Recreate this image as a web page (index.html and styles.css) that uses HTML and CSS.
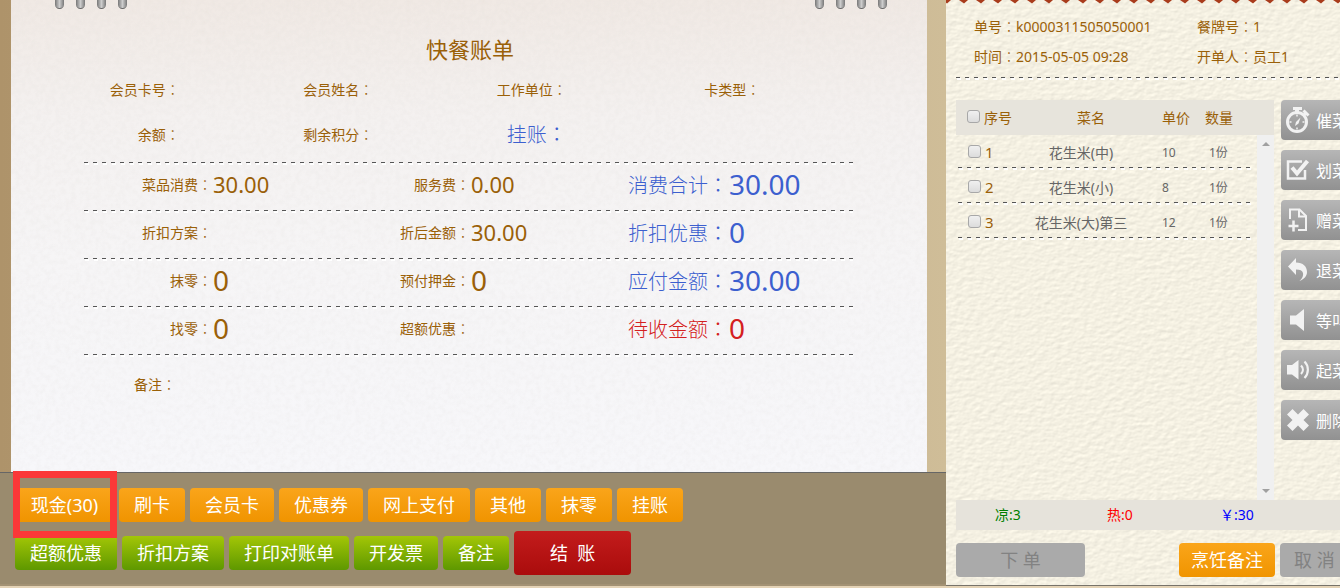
FILE: index.html
```html
<!DOCTYPE html>
<html lang="zh-CN">
<head>
  <meta charset="UTF-8">
  <meta name="viewport" content="width=device-width, initial-scale=1.0">
  <title>快餐账单</title>
  <link rel="stylesheet" href="styles.css">
</head>
<body>
  <div class="page">
    <main class="bill">
      <div class="desk">
        <div class="paper">
          <div class="rings">
            <div class="ring-group"><i></i><i></i><i></i><i></i></div>
            <div class="ring-group"><i></i><i></i><i></i><i></i></div>
          </div>
          <h1>快餐账单</h1>

          <div class="member">
            <div class="label">会员卡号<span class="colon">：</span></div>
            <div class="label">会员姓名<span class="colon">：</span></div>
            <div class="label">工作单位<span class="colon">：</span></div>
            <div class="label">卡类型<span class="colon">：</span></div>
            <div class="label">余额<span class="colon">：</span></div>
            <div class="label">剩余积分<span class="colon">：</span></div>
            <div class="label total">挂账<span class="colon">：</span></div>
          </div>

          <div class="sums">
            <div class="sum-row">
              <span class="label">菜品消费<span class="colon">：</span></span><span class="value">30.00</span>
              <span class="label">服务费<span class="colon">：</span></span><span class="value">0.00</span>
              <span class="label total">消费合计<span class="colon">：</span></span><span class="value big total">30.00</span>
            </div>
            <div class="sum-row">
              <span class="label">折扣方案<span class="colon">：</span></span><span class="value"></span>
              <span class="label">折后金额<span class="colon">：</span></span><span class="value">30.00</span>
              <span class="label total">折扣优惠<span class="colon">：</span></span><span class="value big total">0</span>
            </div>
            <div class="sum-row">
              <span class="label">抹零<span class="colon">：</span></span><span class="value big">0</span>
              <span class="label">预付押金<span class="colon">：</span></span><span class="value big">0</span>
              <span class="label total">应付金额<span class="colon">：</span></span><span class="value big total">30.00</span>
            </div>
            <div class="sum-row">
              <span class="label">找零<span class="colon">：</span></span><span class="value big">0</span>
              <span class="label">超额优惠<span class="colon">：</span></span><span class="value"></span>
              <span class="label total due">待收金额<span class="colon">：</span></span><span class="value big total due">0</span>
            </div>
          </div>

          <div class="remark">备注<span class="colon">：</span></div>
        </div>
      </div>

      <div class="actions">
        <div class="action-row">
          <div class="marked">
            <button type="button" class="btn orange cash">现金(30)</button>
          </div>
          <button type="button" class="btn orange">刷卡</button>
          <button type="button" class="btn orange">会员卡</button>
          <button type="button" class="btn orange">优惠券</button>
          <button type="button" class="btn orange">网上支付</button>
          <button type="button" class="btn orange">其他</button>
          <button type="button" class="btn orange">抹零</button>
          <button type="button" class="btn orange">挂账</button>
        </div>
        <div class="action-row">
          <button type="button" class="btn green">超额优惠</button>
          <button type="button" class="btn green">折扣方案</button>
          <button type="button" class="btn green">打印对账单</button>
          <button type="button" class="btn green">开发票</button>
          <button type="button" class="btn green">备注</button>
          <button type="button" class="btn red">结&nbsp;&nbsp;账</button>
        </div>
      </div>
    </main>

    <aside class="order">
      <div class="order-info">
        <div>单号<span class="colon">：</span>k0000311505050001</div>
        <div>餐牌号<span class="colon">：</span>1</div>
        <div>时间<span class="colon">：</span>2015-05-05 09:28</div>
        <div>开单人<span class="colon">：</span>员工1</div>
      </div>

      <div class="order-body">
        <div class="dishes">
          <table>
            <thead>
              <tr>
                <th class="col-no"><label><input type="checkbox">序号</label></th>
                <th class="col-name">菜名</th>
                <th class="col-price">单价</th>
                <th class="col-count">数量</th>
              </tr>
            </thead>
            <tbody>
              <tr>
                <td class="col-no"><label><input type="checkbox">1</label></td>
                <td class="col-name">花生米(中)</td>
                <td class="col-price">10</td>
                <td class="col-count">1份</td>
              </tr>
              <tr>
                <td class="col-no"><label><input type="checkbox">2</label></td>
                <td class="col-name">花生米(小)</td>
                <td class="col-price">8</td>
                <td class="col-count">1份</td>
              </tr>
              <tr>
                <td class="col-no"><label><input type="checkbox">3</label></td>
                <td class="col-name">花生米(大)第三</td>
                <td class="col-price">12</td>
                <td class="col-count">1份</td>
              </tr>
            </tbody>
          </table>
          <div class="scrollbar"><i class="up"></i><i class="down"></i></div>
        </div>

        <div class="tools">
          <button type="button" class="tool">
            <svg width="26" height="28" viewBox="0 0 26 28" fill="none" stroke="#f2f2f2">
              <circle cx="12" cy="16" r="9.5" stroke-width="3"/>
              <path d="M8 2.500h9" stroke-width="3"/>
              <path d="M12 3v4" stroke-width="4"/>
              <path d="M18.500 4.500l5 5M21 7l-2.500 2.500" stroke-width="3"/>
              <path d="M12 8.500v2M12 21.500v2M4.500 16h2M17.500 16h2" stroke-width="1.500"/>
              <path d="M15.500 11.500l-2 6-3.500 2.500 1-4z" fill="#f2f2f2" stroke="none"/>
            </svg>催菜</button>
          <button type="button" class="tool">
            <svg width="26" height="28" viewBox="0 0 26 28" fill="none" stroke="#f2f2f2">
              <path d="M17 5.500H3v17h17V14" stroke-width="2.500"/>
              <path d="M7 11.500l5 6L22.500 5" stroke-width="4"/>
            </svg>划菜</button>
          <button type="button" class="tool">
            <svg width="26" height="28" viewBox="0 0 26 28" fill="none" stroke="#f2f2f2">
              <path d="M5 13V3.500h9.500l6.500 6.500v14h-8" stroke-width="2"/>
              <path d="M14 3.500v7h7" stroke-width="2"/>
              <path d="M8.500 14.500v11M3.500 20h10" stroke-width="2.500"/>
            </svg>赠菜</button>
          <button type="button" class="tool">
            <svg width="26" height="28" viewBox="0 0 26 28" fill="#f2f2f2">
              <path d="M11 2v4.500c7 0 11 4 11 9.500 0 4-2.500 7-7.500 9 3-3 4-5 3.500-8-.5-2.500-3-3.500-7-3.500V19l-8-8.500z"/>
            </svg>退菜</button>
          <button type="button" class="tool">
            <svg width="26" height="28" viewBox="0 0 26 28" fill="#f2f2f2">
              <path d="M5 9.500h6L19 3v22l-8-6.500H5z"/>
            </svg>等叫</button>
          <button type="button" class="tool">
            <svg width="26" height="28" viewBox="0 0 26 28" fill="#f2f2f2">
              <path d="M2 9h5l6.500-5v19.500L7 18.500H2z"/>
              <path d="M16 9.500c2.500 2.500 2.500 6 0 8.500M19.500 5.500c4.500 4.500 4.500 12 0 16.500" fill="none" stroke="#f2f2f2" stroke-width="2.200"/>
            </svg>起菜</button>
          <button type="button" class="tool">
            <svg width="26" height="28" viewBox="0 0 26 28" fill="#f2f2f2">
              <path d="M7.500 3L13 8.500 18.500 3 24 8.500 18.500 14 24 19.500 18.500 25 13 19.500 7.500 25 2 19.500 7.500 14 2 8.500z"/>
            </svg>删除</button>
        </div>
      </div>

      <div class="counts">
        <span class="cold">凉:3</span>
        <span class="hot">热:0</span>
        <span class="money">￥:30</span>
      </div>

      <div class="order-actions">
        <button type="button" class="btn gray place" disabled>下 单</button>
        <button type="button" class="btn orange cook">烹饪备注</button>
        <button type="button" class="btn gray cancel" disabled>取 消</button>
      </div>
    </aside>
  </div>
</body>
</html>
```

FILE: styles.css
```css
* {
  box-sizing: border-box;
}
body {
  margin: 0;
  font-family: "Noto Sans", "Noto Sans CJK SC", sans-serif;
  font-size: 14px;
  color: #9a6008;
  overflow: hidden;
}
button {
  font-family: inherit;
  border: 0;
  padding: 0;
}
.page {
  display: flex;
  min-height: 100vh;
  border-bottom: 2px solid #e4d3b6;
}
/* keeps the full-width colon in the middle of its cell */
.colon {
  font-family: "Noto Sans CJK TC", sans-serif;
  font-feature-settings: "locl" 0;
  font-weight: 300;
  line-height: 0;
}

/* bill */
.bill {
  flex: 1;
  display: flex;
  flex-direction: column;
  background: linear-gradient(90deg, #ae936a, #cfbd98);
}
.desk {
  flex: 1;
  padding: 0 19px 0 11px;
}
.paper {
  height: 100%;
  padding: 0 70px 0 72px;
  background-color: #f4f3f5;
  background-image:
    url("data:image/svg+xml,%3Csvg xmlns='http://www.w3.org/2000/svg' width='300' height='300'%3E%3Cfilter id='f' x='0' y='0' width='1' height='1'%3E%3CfeTurbulence type='fractalNoise' baseFrequency='.2' numOctaves='3' stitchTiles='stitch'/%3E%3CfeColorMatrix values='0 0 0 0 .4 0 0 0 0 .35 0 0 0 0 .3 .1 0 0 0 -.035'/%3E%3C/filter%3E%3Crect width='300' height='300' filter='url(%23f)'/%3E%3C/svg%3E"),
    linear-gradient(#f0e9e4, #f4f1f0 25%, #f6f5f6 55%, #f7f7fa);
}
.rings {
  display: flex;
  justify-content: space-between;
  margin: 0 -30px 0 -28px;
}
.ring-group {
  display: flex;
  gap: 12px;
}
.ring-group i {
  width: 9px;
  height: 9px;
  border-radius: 0 0 5px 5px;
  background: linear-gradient(90deg, #777, #ccc 50%, #777);
  border-bottom: 1px solid #666;
}
h1 {
  margin: 24px 0 22px;
  font-size: 22px;
  font-weight: normal;
  line-height: 32px;
  text-align: center;
}
.member {
  display: grid;
  grid-template-columns: repeat(4, 1fr);
  grid-auto-rows: 45px;
}
.member .label {
  width: 50%;
  line-height: 6px;
}
.label {
  display: block;
  text-align: right;
  white-space: nowrap;
}
.label.total {
  font-size: 20px;
  font-weight: 300;
}
.total {
  color: #3c5fcf;
}
.due {
  color: #d42020;
}
.sums {
  margin-top: -15px;
}
.sum-row {
  display: grid;
  grid-template-columns: repeat(6, 1fr);
  align-items: center;
  height: 48px;
  padding-bottom: 4px;
}
.value {
  padding-left: 1px;
  font-size: 22px;
  line-height: 40px;
}
.value.big {
  font-size: 28px;
}
/* dark dashes with a white edge under them */
.sum-row,
.order-info,
tbody tr {
  background-repeat: no-repeat;
  background-image:
    repeating-linear-gradient(90deg, #555 0 4px, transparent 4px 9px),
    repeating-linear-gradient(90deg, transparent 0 1px, #fff 1px 5px, transparent 5px 9px);
}
.sum-row {
  background-position: 1px 0, 1px 1px;
  background-size: calc(100% - 5px) 1px, calc(100% - 5px) 2px;
}
.sums::after {
  content: "";
  display: block;
  height: 3px;
  margin: 0 4px 0 1px;
  background:
    repeating-linear-gradient(90deg, #555 0 4px, transparent 4px 9px) 0 0 / 100% 1px no-repeat,
    repeating-linear-gradient(90deg, transparent 0 1px, #fff 1px 5px, transparent 5px 9px) 0 1px / 100% 2px no-repeat;
}
.remark {
  padding: 18px 0 0 51px;
  line-height: 20px;
}

/* buttons */
.actions {
  padding: 15px 15px 9px;
  background: #9a8b6e;
  border-top: 1px solid #666;
  border-bottom: 2px solid #a39274;
}
.action-row {
  display: flex;
  align-items: center;
  gap: 5px;
}
.action-row + .action-row {
  margin-top: 9px;
}
.btn {
  height: 34px;
  padding: 0 15px;
  border-radius: 4px;
  font-size: 18px;
  line-height: 34px;
  color: #fff;
  white-space: nowrap;
}
.orange {
  background: linear-gradient(#faa51a, #f09400);
}
.green {
  background: linear-gradient(#a3c606, #5e9800);
}
.red {
  height: 44px;
  padding: 0 36px;
  background: linear-gradient(#c31c1c, #aa0c0c);
}
.gray {
  background: #aaa;
  color: #828282;
}
.cash {
  min-width: 99px;
}
.marked {
  position: relative;
}
.marked::after {
  content: "";
  position: absolute;
  z-index: 1;
  top: -17px;
  right: -3px;
  bottom: -16px;
  left: -2px;
  border: 7px solid #fb3838;
}

/* order panel */
.order {
  display: flex;
  flex-direction: column;
  width: 394px;
  padding: 12px 0 8px 10px;
  overflow: hidden;
  border-bottom: 1px solid #77736a;
  background-color: #f1eddd;
  background-image:
    url("data:image/svg+xml,%3Csvg xmlns='http://www.w3.org/2000/svg' width='17' height='4'%3E%3Cpath d='M-4 0h9L1 3.500zM13 0h9l-4 3.500z' fill='%23a93c1c'/%3E%3C/svg%3E"),
    url("data:image/svg+xml,%3Csvg xmlns='http://www.w3.org/2000/svg' width='300' height='300'%3E%3Cfilter id='f' x='0' y='0' width='1' height='1' color-interpolation-filters='sRGB'%3E%3CfeTurbulence type='fractalNoise' baseFrequency='.15 .25' numOctaves='3' stitchTiles='stitch'/%3E%3CfeDiffuseLighting lighting-color='%23f4f0e2' surfaceScale='.22' diffuseConstant='1.18'%3E%3CfeDistantLight azimuth='235' elevation='58'/%3E%3C/feDiffuseLighting%3E%3C/filter%3E%3Crect width='300' height='300' filter='url(%23f)'/%3E%3C/svg%3E");
  background-repeat: repeat-x, repeat;
}
.order-info {
  display: grid;
  grid-template-columns: 223px 1fr;
  padding: 0 0 8px 18px;
  line-height: 30px;
  background-position: 0 65px, 0 66px;
  background-size: 100% 1px, 100% 2px;
}
.order-body {
  flex: 1;
  display: flex;
  gap: 7px;
  margin-top: 20px;
}
.dishes {
  position: relative;
  flex: none;
  width: 318px;
}
table {
  width: 100%;
  table-layout: fixed;
  border-collapse: collapse;
}
thead {
  background: #e7e4dc;
}
th, td {
  height: 35px;
  padding: 0 0 1px;
  font-weight: normal;
  text-align: left;
  white-space: nowrap;
}
td {
  color: #666;
}
tbody tr {
  background-position: 2px 32px, 2px 33px;
  background-size: 297px 1px, 297px 2px;
}
.col-no {
  width: 56px;
  padding-left: 11px;
}
.col-no label {
  display: flex;
  align-items: center;
  gap: 4px;
}
td.col-no {
  padding-left: 12px;
  font-size: 15px;
  color: #9a6008;
}
.col-name {
  width: 138px;
  text-align: center;
}
th.col-name {
  padding-left: 20px;
}
.col-price {
  width: 50px;
  padding-left: 12px;
}
.col-count {
  padding-left: 5px;
}
td.col-count {
  padding-left: 9px;
}
td.col-price,
td.col-count {
  font-size: 12px;
}
input[type="checkbox"] {
  appearance: none;
  width: 13px;
  height: 13px;
  margin: 0 0 2px;
  border: 1px solid #a8a8a8;
  border-radius: 3px;
  background: linear-gradient(#f0f0f0, #dcdcdc);
}
.scrollbar {
  position: absolute;
  top: 35px;
  right: 0;
  bottom: 0;
  width: 17px;
  background: #f0f0f0;
  display: flex;
  flex-direction: column;
  justify-content: space-between;
  align-items: center;
  padding: 7px 0;
}
.scrollbar i {
  border: 4px solid transparent;
}
.scrollbar .up {
  border-top: 0;
  border-bottom-color: #a0a0a0;
}
.scrollbar .down {
  border-bottom: 0;
  border-top-color: #a0a0a0;
}
.tools {
  flex: none;
  display: flex;
  flex-direction: column;
  gap: 10px;
}
.tool {
  display: flex;
  align-items: center;
  gap: 5px;
  width: 80px;
  height: 40px;
  padding-left: 4px;
  border-radius: 4px;
  background: linear-gradient(#b6b6b6, #919191);
  color: #fff;
  font-size: 16px;
  white-space: nowrap;
}
.tool svg {
  flex: none;
}
.counts {
  display: grid;
  grid-template-columns: 112px 113px 1fr;
  padding-left: 39px;
  line-height: 30px;
  background: #e6e3db;
}
.cold {
  color: #008000;
}
.hot {
  color: #f00;
}
.money {
  color: #00f;
}
.order-actions {
  display: flex;
  gap: 5px;
  margin-top: 13px;
}
.order-actions .btn {
  flex: none;
}
.place {
  width: 129px;
  margin-right: 89px;
}
.cook {
  padding: 0 12px;
}
.cancel {
  padding: 0 14px;
}
```
